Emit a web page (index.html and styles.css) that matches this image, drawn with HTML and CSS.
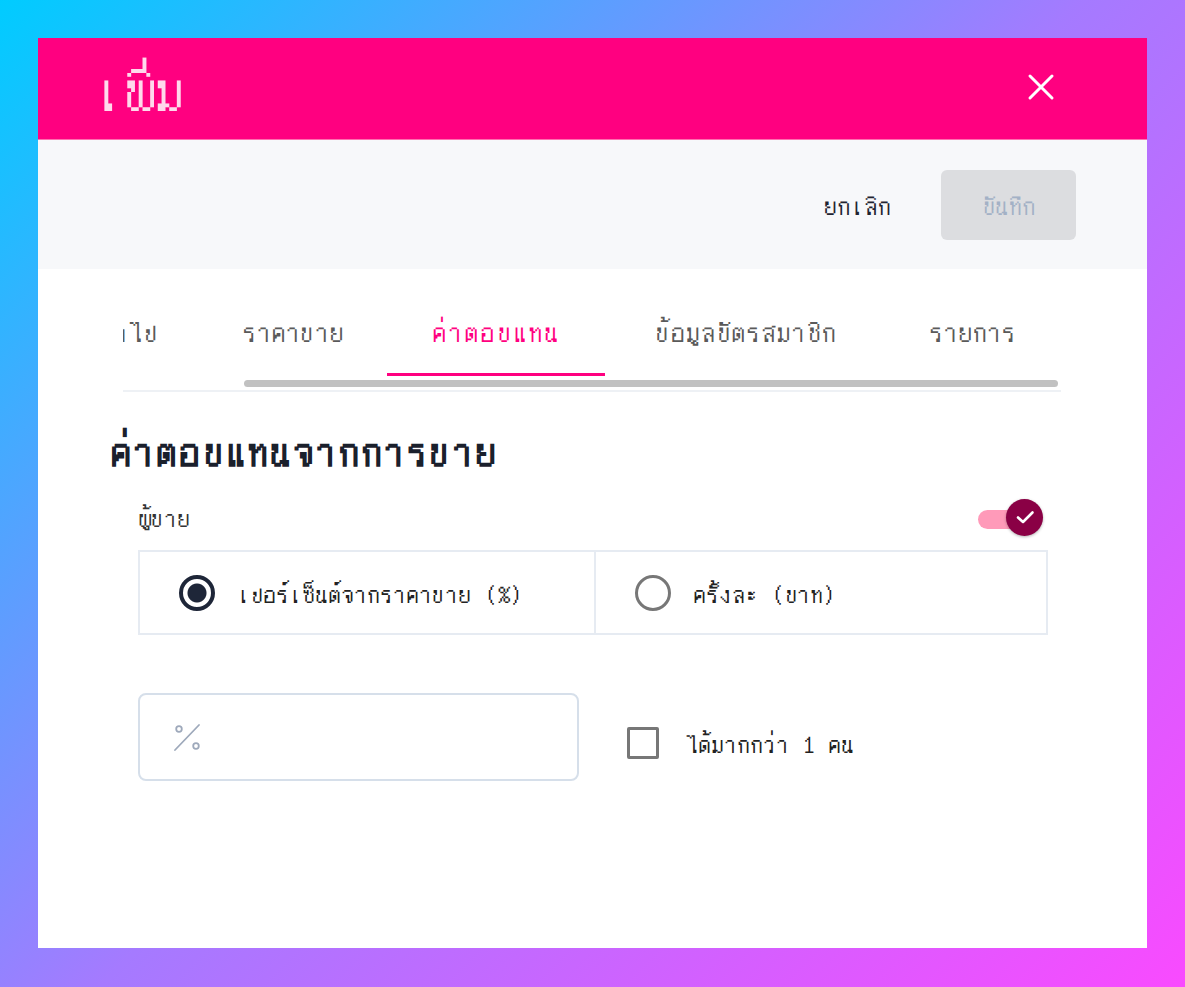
FILE: index.html
```html
<!DOCTYPE html>
<html lang="th">

<head>
  <meta charset="UTF-8" />
  <meta name="viewport" content="width=device-width, initial-scale=1.0" />
  <title>เพิ่ม</title>
  <link rel="stylesheet" href="styles.css">
</head>

<body>
  <div class="dialog">
    <div class="dialog-header">
      <h1 class="dialog-title">เพิ่ม</h1>
      <button class="close-btn" aria-label="close">
        <svg width="28" height="28" viewBox="0 0 28 28">
          <path d="M3 3 L25 25 M25 3 L3 25" stroke="#fff" stroke-width="3" stroke-linecap="round" />
        </svg>
      </button>
    </div>

    <div class="toolbar">
      <button class="btn-cancel">ยกเลิก</button>
      <button class="btn-save" disabled>บันทึก</button>
    </div>

    <div class="tabs">
      <div class="tab-strip">
        <div class="tab-list">
          <div class="tab">ทั่วไป</div>
          <div class="tab">ราคาขาย</div>
          <div class="tab active">ค่าตอบแทน</div>
          <div class="tab">ข้อมูลบัตรสมาชิก</div>
          <div class="tab">รายการ</div>
        </div>
      </div>
      <div class="scrollbar"><div class="scroll-thumb"></div></div>
    </div>

    <div class="content">
      <h2 class="section-title">ค่าตอบแทนจากการขาย</h2>

      <div class="row-label">
        <span>ผู้ขาย</span>
        <div class="toggle">
          <div class="toggle-track"></div>
          <div class="toggle-thumb">
            <svg width="24" height="24" viewBox="0 0 24 24">
              <path d="M5 12.5 L10 17 L19.5 7.5" fill="none" stroke="#fff" stroke-width="2.6" stroke-linecap="round" stroke-linejoin="round" />
            </svg>
          </div>
        </div>
      </div>

      <div class="radio-group">
        <label class="radio-item">
          <span class="radio checked"></span>
          <span>เปอร์เซ็นต์จากราคาขาย (%)</span>
        </label>
        <label class="radio-item">
          <span class="radio"></span>
          <span>ครั้งละ (บาท)</span>
        </label>
      </div>

      <div class="amount-row">
        <div class="amount-input">
          <svg class="percent-icon" width="30" height="30" viewBox="0 0 30 30">
            <circle cx="7" cy="7" r="2.8" fill="none" stroke="#9ea9bb" stroke-width="1.8" />
            <circle cx="24" cy="24" r="2.8" fill="none" stroke="#9ea9bb" stroke-width="1.8" />
            <path d="M27 3 L3 28" stroke="#9ea9bb" stroke-width="1.8" stroke-linecap="round" />
          </svg>
        </div>
        <label class="check-item">
          <span class="checkbox"></span>
          <span>ได้มากกว่า 1 คน</span>
        </label>
      </div>
    </div>
  </div>
</body>

</html>
```

FILE: styles.css
```css
body {
  margin: 0;
  padding: 38px;
  min-height: 100vh;
  box-sizing: border-box;
  font-family: Unifont, "Noto Sans", sans-serif;
  background: linear-gradient(135deg, #00ccff 0%, #a57aff 50%, #f94aff 100%);
}

button {
  font-family: inherit;
  border: none;
  background: none;
  cursor: pointer;
}

.dialog {
  height: 910px;
  background: #fff;
  display: flex;
  flex-direction: column;
}

.dialog-header {
  height: 101px;
  background: #ff0080;
  display: flex;
  align-items: center;
  justify-content: space-between;
  padding: 0 92px 0 55px;
  border-bottom: 1px solid #ff6fb0;
}

.dialog-title {
  margin: 0;
  font-size: 61px;
  font-weight: 400;
  color: #ffd9ec;
}

.close-btn {
  padding: 0;
  width: 28px;
  height: 28px;
  margin-top: -4px;
}

.toolbar {
  height: 129px;
  background: #f7f8fa;
  display: flex;
  align-items: center;
  justify-content: flex-end;
  gap: 30px;
  padding-right: 71px;
}

.btn-cancel {
  font-size: 27px;
  color: #1f2430;
  padding: 0 20px;
}

.btn-save {
  width: 135px;
  height: 70px;
  border-radius: 6px;
  background: #dcdde0;
  color: #a3b1c6;
  font-size: 27px;
  cursor: default;
}

.tabs {
  margin: 28px 86px 0 85px;
  border-bottom: 2px solid #eef1f5;
}

.tab-strip {
  overflow: hidden;
}

.tab-list {
  display: flex;
  margin-left: -66px;
}

.tab {
  flex: none;
  padding: 20px 42px 27px;
  font-size: 29px;
  color: #5a5a5a;
  text-align: center;
  border-bottom: 3px solid transparent;
  white-space: nowrap;
}

.tab:nth-child(2) {
  min-width: 104px;
}

.tab:nth-child(3) {
  min-width: 134px;
  letter-spacing: 1.5px;
}

.tab:nth-child(4) {
  min-width: 198px;
  letter-spacing: 0.6px;
}

.tab.active {
  color: #ff0080;
  border-bottom-color: #ff0080;
}

.scrollbar {
  height: 14px;
  padding: 4px 0 0 121px;
  box-sizing: border-box;
}

.scroll-thumb {
  width: 814px;
  height: 7px;
  border-radius: 4px;
  background: #c1c1c1;
}

.content {
  padding: 36px 99px 0 72px;
}

.section-title {
  margin: 0 0 29px;
  font-size: 43px;
  font-weight: 700;
  letter-spacing: 1.3px;
  color: #1a202c;
}

.row-label {
  display: flex;
  align-items: center;
  justify-content: space-between;
  margin-left: 28px;
  font-size: 26px;
  color: #333;
  height: 34px;
}

.toggle {
  position: relative;
  width: 65px;
  height: 37px;
  margin-right: 5px;
}

.toggle-track {
  position: absolute;
  left: 0;
  top: 11px;
  width: 50px;
  height: 19px;
  border-radius: 10px;
  background: #ff9ab9;
}

.toggle-thumb {
  position: absolute;
  right: 0;
  top: 0;
  width: 37px;
  height: 37px;
  border-radius: 50%;
  background: #8a0045;
  box-shadow: 0 1px 3px rgba(0, 0, 0, 0.3);
  display: flex;
  align-items: center;
  justify-content: center;
}

.radio-group {
  margin: 16px 0 0 28px;
  display: grid;
  grid-template-columns: 454px 1fr;
  border: 2px solid #e6ebf2;
  height: 85px;
  box-sizing: border-box;
}

.radio-item {
  display: flex;
  align-items: center;
  gap: 22px;
  padding-left: 39px;
  font-size: 26px;
  color: #222;
}

.radio-item + .radio-item {
  border-left: 2px solid #e6ebf2;
}

.radio {
  width: 36px;
  height: 36px;
  border-radius: 50%;
  border: 3px solid #777;
  box-sizing: border-box;
  flex: none;
}

.radio.checked {
  border: 4px solid #1e2638;
  background: radial-gradient(circle, #1e2638 0 9px, transparent 10px);
}

.amount-row {
  display: flex;
  align-items: center;
  gap: 48px;
  margin: 58px 0 0 28px;
}

.amount-input {
  width: 441px;
  height: 88px;
  box-sizing: border-box;
  border: 2px solid #d6dfea;
  border-radius: 8px;
  display: flex;
  align-items: center;
  padding-left: 32px;
}

.check-item {
  display: flex;
  align-items: center;
  gap: 26px;
  margin-top: 12px;
  font-size: 26px;
  color: #222;
}

.checkbox {
  width: 32px;
  height: 32px;
  border: 3px solid #777;
  border-radius: 2px;
  box-sizing: border-box;
}
```
